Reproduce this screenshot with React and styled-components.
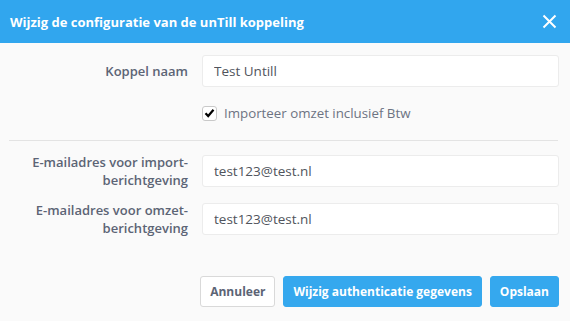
import React from "react";
import styled, { createGlobalStyle } from "styled-components";

const Global = createGlobalStyle`
  html, body { margin: 0; padding: 0; background: #fafafa; }
  body { font-family: "Open Sans", "Liberation Sans", sans-serif; }
  * { box-sizing: border-box; }
`;

const Dialog = styled.div`
  width: 570px;
  height: 321px;
  background: #fafafa;
  display: flex;
  flex-direction: column;
`;

const Header = styled.div`
  height: 43px;
  background: #31a6ee;
  display: flex;
  align-items: center;
  justify-content: space-between;
  padding: 0 13px 0 10px;
`;

const Title = styled.h1`
  margin: 0;
  font-size: 13px;
  font-weight: 700;
  color: #fff;
`;

const Close = styled.button`
  border: 0;
  background: none;
  padding: 0;
  width: 15px;
  height: 15px;
  display: flex;
  cursor: pointer;
`;

const Body = styled.div`
  padding: 12px 11px 0 10px;
  display: flex;
  flex-direction: column;
`;

const Row = styled.div`
  display: grid;
  grid-template-columns: 178px 1fr;
  column-gap: 14px;
  align-items: center;
  margin-top: ${(p) => p.$mt || 0}px;
  margin-bottom: ${(p) => p.$mb || 0}px;
`;

const Label = styled.label`
  text-align: right;
  font-size: 13px;
  font-weight: 600;
  color: #5c6475;
  line-height: 18px;
`;

const Input = styled.input`
  height: 32px;
  width: 100%;
  border: 1px solid #ececec;
  border-radius: 3px;
  background: #fff;
  padding: 0 11px;
  font-family: inherit;
  font-size: 13.5px;
  color: #50545c;
  outline: none;
`;

const CheckLabel = styled.label`
  grid-column: 2;
  display: flex;
  align-items: center;
  gap: 7px;
  font-size: 13.3px;
  color: #6d7382;
  height: 18px;
`;

const Box = styled.span`
  width: 15px;
  height: 15px;
  border: 1px solid #c9c9c9;
  border-radius: 3px;
  background: #fff;
  display: flex;
  align-items: center;
  justify-content: center;
`;

const Divider = styled.hr`
  border: 0;
  border-top: 1px solid #e3e3e3;
  margin: 0 0 0 -1px;
  width: 549px;
`;

const Footer = styled.div`
  display: flex;
  justify-content: flex-end;
  gap: 8px;
  padding: 0 11px 0 0;
  margin-top: 39px;
`;

const Button = styled.button`
  height: 31px;
  border-radius: 3px;
  padding: 0 9px;
  font-family: inherit;
  font-size: 12px;
  font-weight: 700;
  cursor: pointer;
  border: 1px solid ${(p) => (p.$primary ? "#35a8ee" : "#d9d9d9")};
  background: ${(p) => (p.$primary ? "#35a8ee" : "#fff")};
  color: ${(p) => (p.$primary ? "#fff" : "#5c6475")};
`;

export default function App() {
  return (
    <>
      <Global />
      <Dialog>
        <Header>
          <Title>Wijzig de configuratie van de unTill koppeling</Title>
          <Close aria-label="Sluiten">
            <svg width="15" height="15" viewBox="0 0 15 15">
              <path d="M1.5 1.5L13.5 13.5M13.5 1.5L1.5 13.5" stroke="#fff" strokeWidth="2" />
            </svg>
          </Close>
        </Header>
        <Body>
          <Row $mb={17}>
            <Label>Koppel naam</Label>
            <Input defaultValue="Test Untill" />
          </Row>
          <Row $mb={18}>
            <CheckLabel>
              <Box>
                <svg width="11" height="10" viewBox="0 0 11 10">
                  <path d="M1.5 5.2L4.2 8L9.5 1.8" stroke="#000" strokeWidth="2.2" fill="none" />
                </svg>
              </Box>
              Importeer omzet inclusief Btw
            </CheckLabel>
          </Row>
          <Divider />
          <Row $mt={12} $mb={12}>
            <Label>E-mailadres voor import-<br />berichtgeving</Label>
            <Input defaultValue="test123@test.nl" />
          </Row>
          <Row>
            <Label>E-mailadres voor omzet-<br />berichtgeving</Label>
            <Input defaultValue="test123@test.nl" />
          </Row>
        </Body>
        <Footer>
          <Button>Annuleer</Button>
          <Button $primary>Wijzig authenticatie gegevens</Button>
          <Button $primary>Opslaan</Button>
        </Footer>
      </Dialog>
    </>
  );
}
